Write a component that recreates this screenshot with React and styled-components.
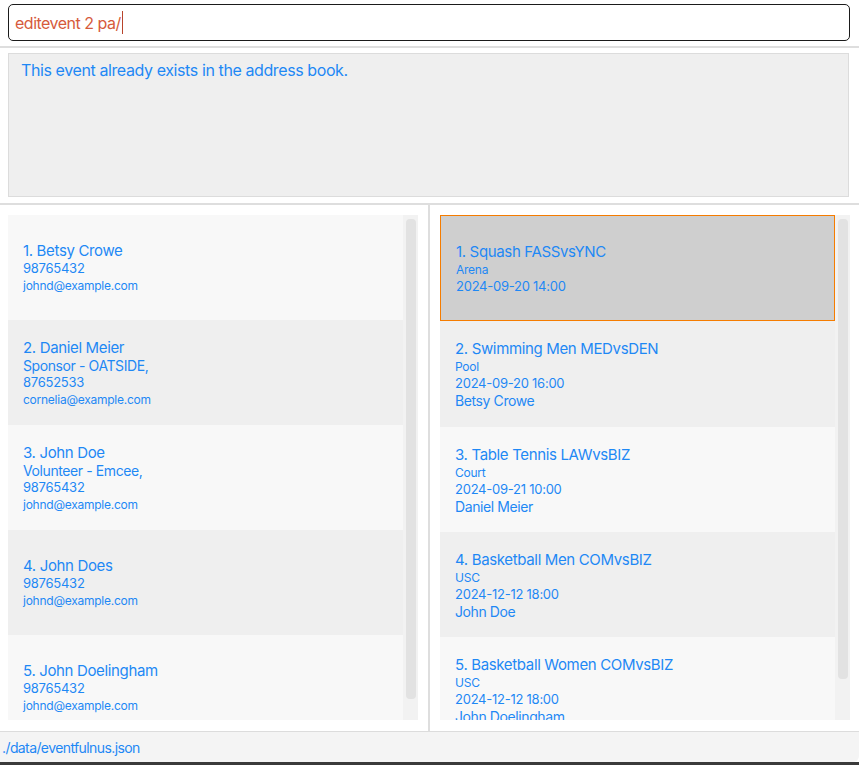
import React from 'react';
import styled, { createGlobalStyle } from 'styled-components';

const GlobalStyle = createGlobalStyle`
  html, body {
    margin: 0;
    padding: 0;
    background: #ffffff;
    font-family: Inter, "Noto Sans", "Liberation Sans", sans-serif;
  }
`;

const persons = [
  { name: 'Betsy Crowe', phone: '98765432', email: 'johnd@example.com' },
  { name: 'Daniel Meier', role: 'Sponsor - OATSIDE,', phone: '87652533', email: 'cornelia@example.com' },
  { name: 'John Doe', role: 'Volunteer - Emcee,', phone: '98765432', email: 'johnd@example.com' },
  { name: 'John Does', phone: '98765432', email: 'johnd@example.com' },
  { name: 'John Doelingham', phone: '98765432', email: 'johnd@example.com' },
];

const events = [
  { name: 'Squash FASSvsYNC', venue: 'Arena', time: '2024-09-20 14:00' },
  { name: 'Swimming Men MEDvsDEN', venue: 'Pool', time: '2024-09-20 16:00', who: 'Betsy Crowe' },
  { name: 'Table Tennis LAWvsBIZ', venue: 'Court', time: '2024-09-21 10:00', who: 'Daniel Meier' },
  { name: 'Basketball Men COMvsBIZ', venue: 'USC', time: '2024-12-12 18:00', who: 'John Doe' },
  { name: 'Basketball Women COMvsBIZ', venue: 'USC', time: '2024-12-12 18:00', who: 'John Doelingham' },
];

const Window = styled.div`
  width: 859px;
  height: 765px;
  display: flex;
  flex-direction: column;
  overflow: hidden;
  background: #fff;
`;

const CommandBar = styled.div`
  height: 46px;
  box-sizing: border-box;
  padding: 4px 9px 5px 8px;
`;

const CommandBox = styled.div`
  height: 37px;
  box-sizing: border-box;
  border: 1px solid #1b1b1b;
  border-radius: 5px;
  display: flex;
  align-items: center;
  padding-left: 6px;
  font-size: 16px;
  letter-spacing: -0.5px;
  color: #d65a3c;
`;

const Caret = styled.span`
  display: inline-block;
  width: 1px;
  height: 23px;
  background: #b8442b;
  margin-left: 1px;
`;

const Separator = styled.div`
  height: 2px;
  background: #dedede;
  flex-shrink: 0;
`;

const ResultArea = styled.div`
  height: 155px;
  box-sizing: border-box;
  padding: 5px 10px 6px 8px;
`;

const ResultBox = styled.div`
  height: 144px;
  box-sizing: border-box;
  background: #efefef;
  border: 1px solid #dcdcdc;
  padding: 6px 12px;
  font-size: 16px;
  letter-spacing: -0.4px;
  color: #1e88f5;
`;

const Panes = styled.div`
  flex: 1;
  display: flex;
  min-height: 0;
`;

const Pane = styled.div`
  width: ${p => p.width}px;
  box-sizing: border-box;
  padding: 10px ${p => p.right}px 11px ${p => p.left}px;
  display: flex;
`;

const Divider = styled.div`
  width: 2px;
  background: #dedede;
`;

const List = styled.div`
  flex: 1;
  display: flex;
  overflow: hidden;
  background: #f8f8f8;
`;

const Cells = styled.div`
  flex: 1;
  display: flex;
  flex-direction: column;
  overflow: hidden;
`;

const Cell = styled.div`
  height: ${p => p.h}px;
  flex-shrink: 0;
  box-sizing: border-box;
  display: flex;
  flex-direction: column;
  justify-content: center;
  padding-left: 15px;
  background: ${p => (p.selected ? '#cfcfcf' : p.odd ? '#efefef' : '#f8f8f8')};
  border: ${p => (p.selected ? '1px solid #f57c00' : 'none')};
  color: #1e88f5;
`;

const Name = styled.div`
  font-size: 15px;
  line-height: 19px;
  letter-spacing: -0.35px;
`;

const Line = styled.div`
  font-size: ${p => p.size}px;
  line-height: 17px;
  letter-spacing: ${p => (p.size > 13 ? -0.4 : -0.25)}px;
`;

const Track = styled.div`
  width: 15px;
  background: #f2f2f2;
  padding: 4px 2px 0 3px;
  box-sizing: border-box;
`;

const Thumb = styled.div`
  height: ${p => p.h}px;
  background: #e2e2e2;
  border-radius: 4px;
`;

const StatusBar = styled.div`
  height: 31px;
  box-sizing: border-box;
  border-top: 1px solid #dcdcdc;
  background: #f4f4f4;
  display: flex;
  align-items: center;
  padding-left: 2px;
  font-size: 14px;
  letter-spacing: -0.6px;
  color: #1e88f5;
  border-bottom-right-radius: 6px;
`;

const Bottom = styled.div`
  height: 3px;
  background: #3a3a3a;
`;

function PersonCell({ p, i }) {
  return (
    <Cell h={105} odd={i % 2 === 1}>
      <Name>{i + 1}. {p.name}</Name>
      {p.role && <Line size={14}>{p.role}</Line>}
      <Line size={13}>{p.phone}</Line>
      <Line size={12}>{p.email}</Line>
    </Cell>
  );
}

function EventCell({ e, i }) {
  return (
    <Cell h={i < 2 ? 106 : 105} odd={i % 2 === 1} selected={i === 0}>
      <Name>{i + 1}. {e.name}</Name>
      <Line size={12}>{e.venue}</Line>
      <Line size={13}>{e.time}</Line>
      {e.who && <Line size={14}>{e.who}</Line>}
    </Cell>
  );
}

export default function App() {
  return (
    <Window>
      <GlobalStyle />
      <CommandBar>
        <CommandBox>
          editevent 2 pa/<Caret />
        </CommandBox>
      </CommandBar>
      <Separator />
      <ResultArea>
        <ResultBox>This event already exists in the address book.</ResultBox>
      </ResultArea>
      <Separator />
      <Panes>
        <Pane width={428} left={8} right={10}>
          <List>
            <Cells>
              {persons.map((p, i) => <PersonCell key={i} p={p} i={i} />)}
            </Cells>
            <Track><Thumb h={480} /></Track>
          </List>
        </Pane>
        <Divider />
        <Pane width={429} left={10} right={9}>
          <List>
            <Cells>
              {events.map((e, i) => <EventCell key={i} e={e} i={i} />)}
            </Cells>
            <Track><Thumb h={460} /></Track>
          </List>
        </Pane>
      </Panes>
      <StatusBar>./data/eventfulnus.json</StatusBar>
      <Bottom />
    </Window>
  );
}
